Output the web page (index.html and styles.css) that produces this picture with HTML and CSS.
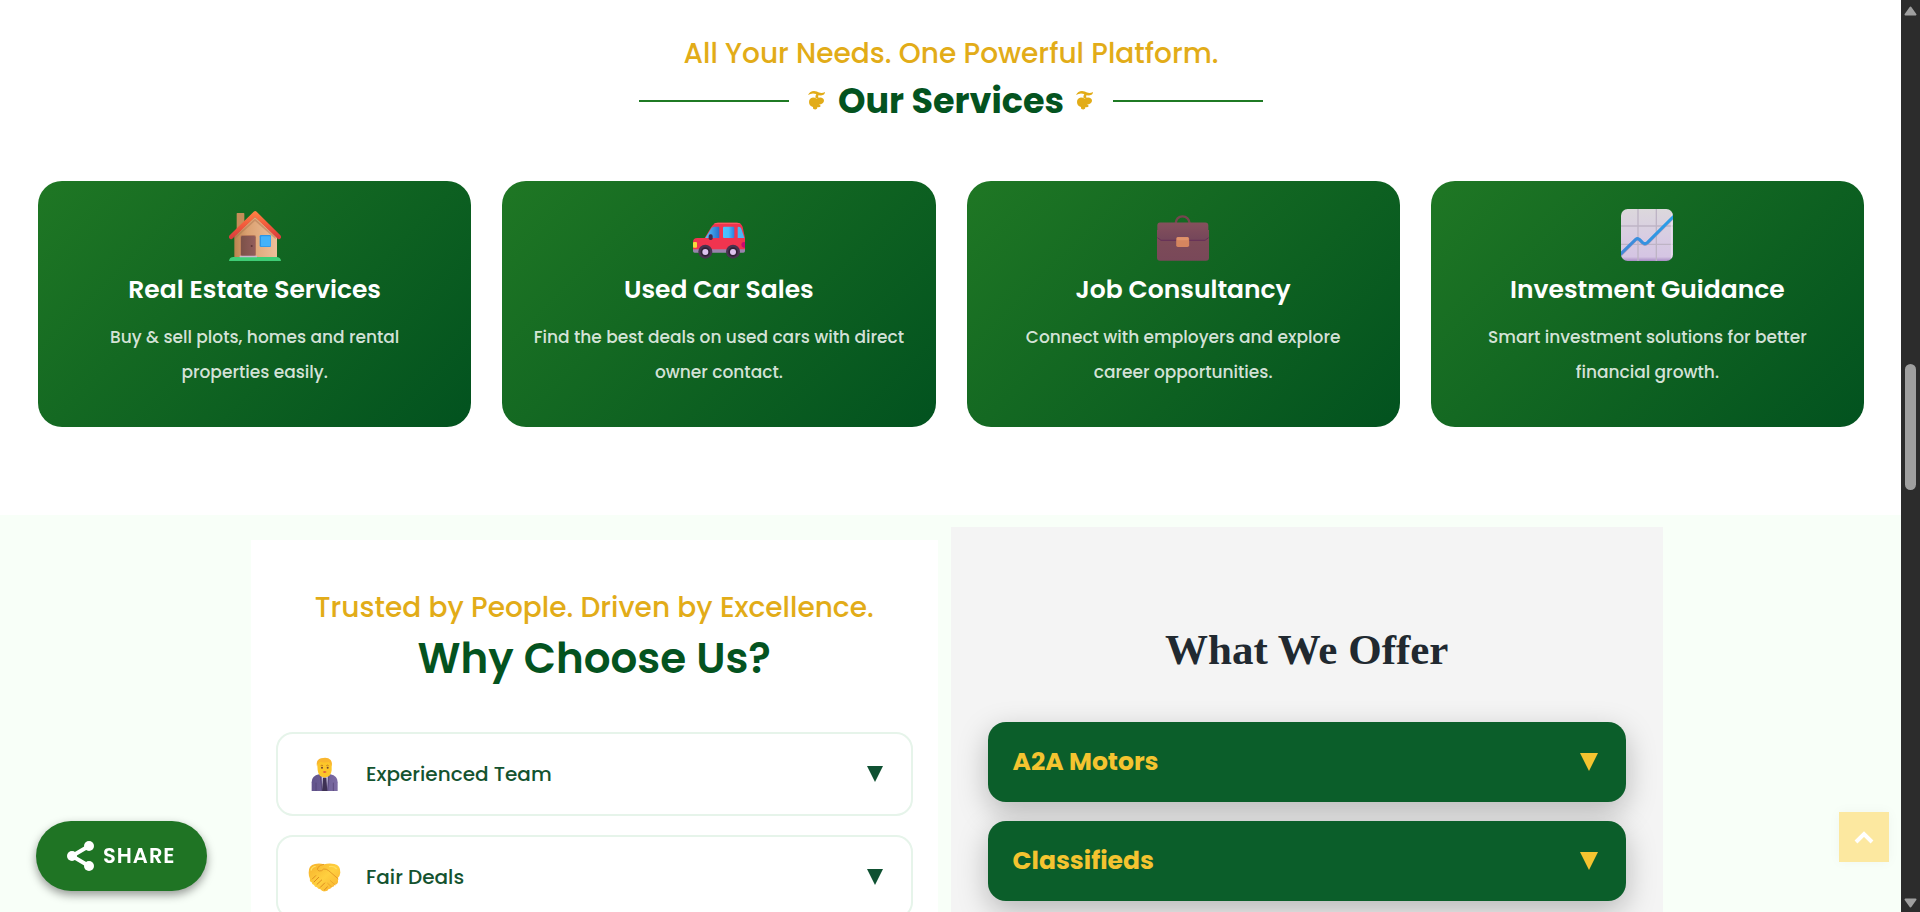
FILE: index.html
```html
<!DOCTYPE html>
<html lang="en">
<head>
<meta charset="utf-8">
<meta name="viewport" content="width=device-width, initial-scale=1">
<title>Our Services</title>
<link rel="stylesheet" href="styles.css">
</head>
<body>
<div class="window">
  <main class="page">
    <section class="services">
      <header class="services-head">
        <p class="tagline">All Your Needs. One Powerful Platform.</p>
        <div class="title-row">
          <span class="rule"></span>
          <h2 class="services-title">
            <svg class="flower" viewBox="0 0 18 20" aria-hidden="true"><path d="M0 4q2-4 6-4 3 0 5 1.500 3 1 6-.5 0 3-4 3.500-3 0-5-1.500-4-1.500-8 1z"/><path d="M10 2q-3 1-2.500 5h3q-1-3 1-4z"/><path d="M1 11q0-4 4-4.500 2 0 3.500 1 4-2 6.500 0 2 2 0 4.500-2 1.500-4 1.500 2 .5 1.500 2-1 1-3 .5 0 2-2 2.500-3 0-2.500-2.500-4-1-4-5z"/></svg>
            <span>Our Services</span>
            <svg class="flower" viewBox="0 0 18 20" aria-hidden="true"><path d="M0 4q2-4 6-4 3 0 5 1.500 3 1 6-.5 0 3-4 3.500-3 0-5-1.500-4-1.500-8 1z"/><path d="M10 2q-3 1-2.500 5h3q-1-3 1-4z"/><path d="M1 11q0-4 4-4.500 2 0 3.500 1 4-2 6.500 0 2 2 0 4.500-2 1.500-4 1.500 2 .5 1.500 2-1 1-3 .5 0 2-2 2.500-3 0-2.500-2.500-4-1-4-5z"/></svg>
          </h2>
          <span class="rule"></span>
        </div>
      </header>
      <div class="cards">
        <article class="card">
          <svg class="card-icon" viewBox="624 117 156 156" aria-hidden="true">
            <defs>
              <linearGradient id="wall" x1="0" x2="1"><stop offset="0" stop-color="#b9844f"/><stop offset=".3" stop-color="#dba070"/><stop offset="1" stop-color="#eec09a"/></linearGradient>
              <linearGradient id="roof" x1="0" y1="0" x2="0" y2="1"><stop offset="0" stop-color="#ff8344"/><stop offset=".5" stop-color="#f25a3c"/><stop offset="1" stop-color="#d8383d"/></linearGradient>
              <linearGradient id="door" x1="0" x2="1"><stop offset="0" stop-color="#7c5148"/><stop offset="1" stop-color="#925d5c"/></linearGradient>
            </defs>
            <rect x="647" y="129" width="23" height="50" rx="2" fill="#c58d58"/>
            <path d="M640 262V198l62-58 66 60v62z" fill="url(#wall)"/>
            <path d="M702 146l62 54v8l-62-55-60 54v-7z" fill="#a9714c" opacity=".45"/>
            <path d="M698 125q5-4 9 0l71 71q4 5 1 9-4 5-9 1L702 141 634 206q-5 4-9-1-3-4 1-9z" fill="url(#roof)"/>
            <rect x="658" y="195" width="47" height="65" rx="6" fill="#b97a5a"/>
            <rect x="660" y="198" width="43" height="60" rx="4" fill="url(#door)"/>
            <circle cx="692" cy="228" r="3" fill="#5e3536"/>
            <rect x="716" y="195" width="34" height="36" rx="4" fill="#2c95e4"/>
            <rect x="720" y="199" width="29" height="30" rx="2" fill="#43b2f9"/>
            <path d="M624 273q1-12 14-12h128q13 0 14 12z" fill="#3fcd76"/>
            <rect x="656" y="257" width="52" height="5" rx="1" fill="#c9b8cd"/>
          </svg>
          <h3 class="card-title">Real Estate Services</h3>
          <p class="card-text">Buy &amp; sell plots, homes and rental properties easily.</p>
        </article>
        <article class="card">
          <svg class="card-icon" viewBox="606 117 156 156" aria-hidden="true">
            <defs>
              <linearGradient id="glass" x1="0" x2="1"><stop offset="0" stop-color="#4cc4ff"/><stop offset=".5" stop-color="#48bcfb"/><stop offset="1" stop-color="#2e7fdc"/></linearGradient>
              <linearGradient id="glass2" x1="0" x2="1"><stop offset="0" stop-color="#55c8ff"/><stop offset="1" stop-color="#276fcb"/></linearGradient>
            </defs>
            <path d="M606 236h156v7q0 5-5 5H611q-5 0-5-5z" fill="#9a83ad"/>
            <path d="M606 238v-22q0-12 13-12h22l20-33q8-13 20-13h56q14 0 18 13l7 33v34z" fill="#f0344f"/>
            <path d="M668 162q5-4 13-4h56q8 0 12 4z" fill="#ff5660"/>
            <path d="M643 204l18-29q3-5 9-5h12q3 0 3 3v31z" fill="url(#glass2)"/>
            <rect x="696" y="170" width="34" height="34" rx="3" fill="url(#glass)"/>
            <path d="M743 170q6 0 8 6l9 28h-20v-31q0-3 3-3z" fill="#4ab8f5"/>
            <rect x="653" y="193" width="12" height="17" rx="5" fill="#45284c"/>
            <rect x="606" y="216" width="12" height="17" rx="3" fill="#f8d93d"/>
            <path d="M762 216v17h-4q-7-2-7-9 0-7 7-8z" fill="#c70a70"/>
            <circle cx="643" cy="245" r="21" fill="#47334f"/><circle cx="643" cy="246" r="14" fill="#2f2035"/><circle cx="643" cy="246" r="9" fill="#dcc3ee"/>
            <circle cx="726" cy="245" r="21" fill="#47334f"/><circle cx="726" cy="246" r="14" fill="#2f2035"/><circle cx="726" cy="246" r="9" fill="#dcc3ee"/>
          </svg>
          <h3 class="card-title">Used Car Sales</h3>
          <p class="card-text">Find the best deals on used cars with direct owner contact.</p>
        </article>
        <article class="card">
          <svg class="card-icon" viewBox="590 117 157 156" aria-hidden="true">
            <defs>
              <linearGradient id="case" x1="0" y1="0" x2="0" y2="1"><stop offset="0" stop-color="#7e4d57"/><stop offset="1" stop-color="#794859"/></linearGradient>
              <linearGradient id="flap" x1="0" y1="0" x2="0" y2="1"><stop offset="0" stop-color="#85515c"/><stop offset="1" stop-color="#74465a"/></linearGradient>
            </defs>
            <path d="M646 162q2-23 21-23t22 23" fill="none" stroke="#75454f" stroke-width="7"/>
            <path d="M590 180h157v84q0 9-9 9H599q-9 0-9-9z" fill="url(#case)"/>
            <path d="M599 157h137q9 0 9 9v36l-10 9H602l-11-9v-36q0-9 8-9z" fill="url(#flap)"/>
            <path d="M591 203l11 8h133l11-8" fill="none" stroke="#642d58" stroke-width="3"/>
            <rect x="648" y="201" width="39" height="30" rx="5" fill="#d5855f"/>
            <rect x="650" y="202" width="35" height="9" rx="4" fill="#e0936c"/>
          </svg>
          <h3 class="card-title">Job Consultancy</h3>
          <p class="card-text">Connect with employers and explore career opportunities.</p>
        </article>
        <article class="card">
          <svg class="card-icon" viewBox="603 117 156 156" aria-hidden="true">
            <defs>
              <linearGradient id="sheet" x1="0" y1="0" x2="0" y2="1"><stop offset="0" stop-color="#dcd8dc"/><stop offset=".5" stop-color="#d8cde2"/><stop offset=".92" stop-color="#d5c5e3"/><stop offset="1" stop-color="#a88cc4"/></linearGradient>
              <linearGradient id="trend" x1="0" x2="1"><stop offset="0" stop-color="#4287d8"/><stop offset="1" stop-color="#27a0ea"/></linearGradient>
              <clipPath id="sheet-clip"><rect x="603" y="117" width="156" height="156" rx="20"/></clipPath>
            </defs>
            <g clip-path="url(#sheet-clip)">
              <rect x="603" y="117" width="156" height="156" fill="url(#sheet)"/>
              <path d="M654 117v156M709 117v156M603 168h156M603 223h156" stroke="#beb4c5" stroke-width="4" fill="none"/>
              <path d="M755 130v135" stroke="#eee6f3" stroke-width="5" opacity=".7"/>
              <path d="M600 257l47-47q6-6 12 1l9 9q7 6 14 0l82-82" stroke="#a99abb" stroke-width="9" fill="none"/>
              <path d="M600 254l47-46q6-5 12 1l9 9q7 6 14 0l82-82" stroke="url(#trend)" stroke-width="9" fill="none"/>
            </g>
          </svg>
          <h3 class="card-title">Investment Guidance</h3>
          <p class="card-text">Smart investment solutions for better financial growth.</p>
        </article>
      </div>
    </section>

    <section class="about">
      <div class="about-inner">
        <div class="why">
          <p class="tagline">Trusted by People. Driven by Excellence.</p>
          <h2 class="why-title">Why Choose Us?</h2>
          <div class="why-list">
            <button class="why-item" type="button" aria-expanded="false">
              <svg class="why-icon" viewBox="205 111 99 105" aria-hidden="true">
                <defs><linearGradient id="suit" x1="0" x2="1"><stop offset="0" stop-color="#62548c"/><stop offset=".5" stop-color="#6d5f96"/><stop offset="1" stop-color="#7d6ca4"/></linearGradient></defs>
                <path d="M216 213v-26q0-20 22-24h34q22 4 22 24v26z" fill="url(#suit)"/>
                <path d="M246 162h19l-3 51h-14z" fill="#cfc8e2"/>
                <path d="M250 173h10l3 40h-16z" fill="#3e3154"/>
                <path d="M241 163l6 50M268 163l-4 50M229 188v25M281 188v25" stroke="#50406f" stroke-width="2"/>
                <path d="M245 157h20v9l-10 8-10-8z" fill="#eda41e"/>
                <path d="M233 137q0-20 22-20t21 20v14q-2 21-21 21t-21-21z" fill="#fcc629"/>
                <path d="M232 139q-4-20 12-24 20-5 29 5 6 8 2 19-3-11-8-13-16 3-26-1-6 4-9 14z" fill="#f9b62f"/>
                <path d="M243 137q4-3 7 0M260 137q4-3 7 0" stroke="#a85c16" stroke-width="2" fill="none"/>
                <circle cx="247" cy="143" r="3" fill="#704332"/><circle cx="264" cy="143" r="3" fill="#704332"/>
                <path d="M249 156q6 5 12 0-6-5-12 0z" fill="#d83b42"/>
              </svg>
              <span class="why-label">Experienced Team</span>
              <span class="why-arrow" aria-hidden="true"></span>
            </button>
            <button class="why-item" type="button" aria-expanded="false">
              <svg class="why-icon" viewBox="205 424 99 105" aria-hidden="true">
                <defs><linearGradient id="hand" x1="0" y1="0" x2="1" y2="1"><stop offset="0" stop-color="#f6b12c"/><stop offset=".5" stop-color="#ffd03f"/><stop offset="1" stop-color="#f8ae2e"/></linearGradient></defs>
                <path d="M207 462q-1-22 19-26 14-3 27 1 15-4 31-1 19 4 18 26-1 9-7 15v14q-2 8-10 7-2 8-9 7-3 7-9 6-3 8-12 7-8 1-13-6-7 0-10-6-7 0-9-7-7-1-7-8-7-2-5-10-4-8-4-19z" fill="url(#hand)"/>
                <path d="M253 437q-11 1-18 9-5 8 3 11 9 1 14-6 8-1 15 5l29 25" fill="none" stroke="#e59a26" stroke-width="3"/>
                <path d="M218 481l10-10M223 490l14-14M232 497l14-13M242 506l13-13M254 514l9-9" fill="none" stroke="#de8b20" stroke-width="3" stroke-linecap="round"/>
                <path d="M264 494l12 11M272 486l14 12" fill="none" stroke="#eda82c" stroke-width="3" stroke-linecap="round"/>
                <path d="M214 456q2-12 14-13M268 444q15-4 23 7" stroke="#ffdf60" stroke-width="4" fill="none"/>
              </svg>
              <span class="why-label">Fair Deals</span>
              <span class="why-arrow" aria-hidden="true"></span>
            </button>
          </div>
        </div>
        <div class="offer">
          <h2 class="offer-title">What We Offer</h2>
          <div class="offer-list">
            <button class="offer-item" type="button" aria-expanded="false"><span>A2A Motors</span><span class="offer-arrow" aria-hidden="true"></span></button>
            <button class="offer-item" type="button" aria-expanded="false"><span>Classifieds</span><span class="offer-arrow" aria-hidden="true"></span></button>
          </div>
        </div>
      </div>
    </section>
  </main>

  <div class="scrollbar" aria-hidden="true">
    <svg class="scroll-arrow" viewBox="0 0 13 10"><path d="M6.500 1.500L11.500 8.500H1.500z"/></svg>
    <div class="scroll-track"><div class="scroll-thumb"></div></div>
    <svg class="scroll-arrow" viewBox="0 0 13 10"><path d="M6.500 8.500L1.500 1.500H11.500z"/></svg>
  </div>

  <button class="share" type="button">
    <svg class="share-icon" viewBox="0 0 28 30" aria-hidden="true"><path d="M22 5L5 15l17 10" fill="none" stroke="#fff" stroke-width="4"/><circle cx="22" cy="5" r="5" fill="#fff"/><circle cx="5" cy="15" r="5" fill="#fff"/><circle cx="22" cy="25" r="5" fill="#fff"/></svg>
    <span>SHARE</span>
  </button>
  <a class="to-top" href="#" aria-label="Back to top"><svg class="to-top-icon" viewBox="0 0 20 13" aria-hidden="true"><path d="M2 11l8-8 8 8" fill="none" stroke="#fff" stroke-width="4"/></svg></a>
</div>
</body>
</html>
```

FILE: styles.css
```css
* { box-sizing: border-box; }

body {
  margin: 0;
  font-family: Poppins, Inter, "Open Sans", sans-serif;
  background: #fff;
}

h2, h3, p { margin: 0; }

button {
  font: inherit;
  border: 0;
  cursor: pointer;
}

.window {
  display: grid;
  grid-template-columns: minmax(0, 1fr) 19px;
  height: 100vh;
  overflow: hidden;
}

.page { overflow: hidden; }

.services { padding: 37px 37px 88px 38px; }

.services-head { text-align: center; }

.tagline {
  font-size: 28px;
  line-height: 34px;
  font-weight: 500;
  color: #e2ac18;
  text-align: center;
}

.title-row {
  display: flex;
  align-items: center;
  justify-content: center;
  gap: 19px;
  margin-top: 9px;
}

.rule {
  width: 150px;
  height: 2px;
  background: #1f7a24;
}

.services-title {
  display: flex;
  align-items: center;
  gap: 12px;
  font-size: 35px;
  line-height: 42px;
  font-weight: 700;
  color: #04531f;
}

.flower {
  width: 18px;
  height: 20px;
  fill: #e2ac18;
}

.cards {
  display: grid;
  grid-template-columns: repeat(4, minmax(0, 1fr));
  gap: 31px;
  margin-top: 59px;
}

.card {
  display: flex;
  flex-direction: column;
  align-items: center;
  padding: 28px 30px 37px;
  border-radius: 24px;
  background: linear-gradient(135deg, #1f7724, #02521f);
  color: #fff;
  text-align: center;
}

.card-icon { width: 52px; height: 52px; }

.card-title {
  margin-top: 13px;
  font-size: 25px;
  line-height: 32px;
  font-weight: 600;
}

.card-text {
  margin-top: 14px;
  font-size: 17px;
  line-height: 35px;
  font-weight: 500;
  color: rgba(255, 255, 255, .84);
}

.about { background: #f8fff8; padding-top: 12px; }

.about-inner {
  display: grid;
  grid-template-columns: 1fr 1fr;
  max-width: 1425px;
  margin: 0 auto;
}

.why {
  margin: 13px;
  padding: 51px 25px;
  background: #fff;
}

.why-title {
  margin-top: 9px;
  font-size: 42px;
  line-height: 50px;
  font-weight: 600;
  color: #04531f;
  text-align: center;
}

.why-list { display: grid; gap: 19px; margin-top: 48px; }

.why-item {
  display: flex;
  align-items: center;
  height: 84px;
  padding: 0 28px;
  border: 2px solid #e6f4ea;
  border-radius: 17px;
  background: #fff;
  color: #14532f;
  font-size: 20px;
  line-height: 24px;
  font-weight: 500;
}

.why-icon { width: 33px; height: 35px; margin-left: 2px; }

.why-label { margin-left: 25px; }

.why-arrow {
  margin-left: auto;
  border: 8px solid transparent;
  border-top: 16px solid #0f5132;
  border-bottom: 0;
}

.offer {
  padding: 96px 37px 40px;
  background: #f4f4f4;
}

.offer-title {
  font-family: "Liberation Serif", "Times New Roman", serif;
  font-size: 43px;
  line-height: 54px;
  font-weight: 700;
  color: #212930;
  text-align: center;
}

.offer-list { display: grid; gap: 19px; margin-top: 45px; }

.offer-item {
  display: flex;
  align-items: center;
  justify-content: space-between;
  height: 80px;
  padding: 0 28px 0 25px;
  border-radius: 18px;
  background: #0b5e2a;
  box-shadow: 0 10px 30px rgba(0, 0, 0, .25);
  color: #f4c430;
  font-size: 25px;
  line-height: 30px;
  font-weight: 700;
}

.offer-arrow {
  border: 9px solid transparent;
  border-top: 18px solid #f4c430;
  border-bottom: 0;
}

.scrollbar {
  display: flex;
  flex-direction: column;
  align-items: center;
  padding: 6px 0 4px;
  background: #2c2c2c;
}

.scroll-arrow {
  width: 13px;
  height: 10px;
  fill: #9f9f9f;
  stroke: #9f9f9f;
  stroke-width: 2;
  stroke-linejoin: round;
}

.scroll-track { flex: 1; padding-top: 348px; }

.scroll-thumb {
  width: 11px;
  height: 126px;
  border-radius: 6px;
  background: #9f9f9f;
}

.share {
  position: fixed;
  left: 36px;
  bottom: 21px;
  display: flex;
  align-items: center;
  gap: 8px;
  height: 70px;
  padding: 0 31px;
  border-radius: 35px;
  background: #1f7424;
  box-shadow: 0 4px 10px rgba(0, 0, 0, .4);
  color: #fff;
  font-size: 21px;
  line-height: 26px;
  font-weight: 600;
  letter-spacing: 1px;
}

.share-icon { width: 28px; height: 30px; }

.to-top {
  position: fixed;
  right: 31px;
  bottom: 50px;
  display: grid;
  place-items: center;
  width: 50px;
  height: 50px;
  background: #fce8a0;
  box-shadow: 0 0 12px rgba(0, 0, 0, .04);
}

.to-top-icon { width: 20px; height: 13px; }
```
